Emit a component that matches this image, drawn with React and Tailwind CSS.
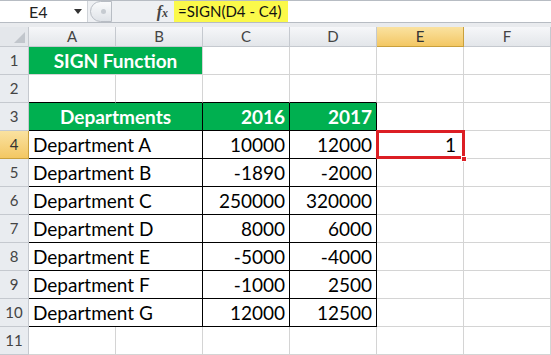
import React from "react";

const font = { fontFamily: "Lato, 'Open Sans', sans-serif" };

function RowHeader({ n, active }) {
  return (
    <div
      className={
        active
          ? "w-[29px] shrink-0 flex items-center justify-center border-r border-b border-[#c9a03c] bg-gradient-to-b from-[#fae2a0] to-[#f3c762] text-[15px] text-[#333]"
          : "w-[29px] shrink-0 flex items-center justify-center border-r border-b border-[#c5c9cf] bg-[#e9ecf0] text-[15px] text-[#444]"
      }
    >
      {n}
    </div>
  );
}

function ColHeader({ label, active, last }) {
  if (active)
    return (
      <div className="w-[87px] shrink-0 flex items-center justify-center border-r border-b border-[#c9a03c] bg-gradient-to-b from-[#fae2a0] to-[#f3c762] text-[15px] text-[#333]">
        {label}
      </div>
    );
  return (
    <div
      className={
        last
          ? "flex-1 flex items-center justify-center border-r border-b border-[#c5c9cf] bg-gradient-to-b from-[#f6f7f9] to-[#e3e6ea] text-[15px] text-[#444]"
          : "w-[87px] shrink-0 flex items-center justify-center border-r border-b border-[#c5c9cf] bg-gradient-to-b from-[#f6f7f9] to-[#e3e6ea] text-[15px] text-[#444]"
      }
    >
      {label}
    </div>
  );
}

const data = [
  ["Department A", "10000", "12000"],
  ["Department B", "-1890", "-2000"],
  ["Department C", "250000", "320000"],
  ["Department D", "8000", "6000"],
  ["Department E", "-5000", "-4000"],
  ["Department F", "-1000", "2500"],
  ["Department G", "12000", "12500"],
];

function EmptyTail() {
  return (
    <>
      <div className="w-[87px] shrink-0 border-r border-b border-[#d4d4d4]" />
      <div className="flex-1 border-r border-b border-[#d4d4d4]" />
    </>
  );
}

export default function App() {
  return (
    <div className="w-[551px] h-[355px] overflow-hidden bg-white flex flex-col text-black" style={font}>
      {/* Formula bar */}
      <div className="h-[23px] flex shrink-0 bg-[#eef0f3] border-t border-b border-[#b7bcc3]">
        <div className="w-[88px] bg-white flex items-center pl-[29px] pr-[5px] text-[16px] text-[#222] border-r border-[#cfd3d8]">
          <span className="flex-1">E4</span>
          <svg width="8" height="5" viewBox="0 0 8 5">
            <path d="M0 0 L8 0 L4 5 Z" fill="#333" />
          </svg>
        </div>
        <div className="w-[86px] flex items-center">
          <div className="ml-[2px] w-[22px] h-[21px] rounded-l-full border border-[#b8bdc4] bg-gradient-to-b from-[#fafbfc] to-[#dfe3e8] flex items-center justify-center">
            <div className="w-[5px] h-[5px] rounded-full bg-[#c6cbd1] ml-[4px]" />
          </div>
          <span
            className="ml-auto mr-[6px] text-[16px] italic font-bold text-[#444]"
            style={{ fontFamily: "'Liberation Serif', serif" }}
          >
            f<span className="text-[12px]">x</span>
          </span>
        </div>
        <div className="w-[114px] bg-[#fbf94a] flex items-center pl-[4px] text-[15px] text-[#111] whitespace-nowrap overflow-hidden">
          =SIGN(D4 - C4)
        </div>
        <div className="flex-1 bg-white" />
      </div>
      <div className="h-[4px] shrink-0 bg-[#e9ebee]" />

      {/* Column header */}
      <div className="h-[20px] flex shrink-0">
        <div className="w-[29px] shrink-0 border-r border-b border-[#c5c9cf] bg-[#e4e7eb] relative">
          <svg className="absolute right-[3px] bottom-[3px]" width="11" height="11" viewBox="0 0 11 11">
            <path d="M11 0 L11 11 L0 11 Z" fill="#c1c6cc" />
          </svg>
        </div>
        <ColHeader label="A" />
        <ColHeader label="B" />
        <ColHeader label="C" />
        <ColHeader label="D" />
        <ColHeader label="E" active />
        <ColHeader label="F" last />
      </div>

      {/* Row 1 */}
      <div className="h-[28px] flex shrink-0">
        <RowHeader n={1} />
        <div className="w-[174px] shrink-0 bg-[#00b050] border-r border-b border-[#d4d4d4] flex items-center justify-center pt-[2px] text-[19px] font-bold text-white">
          SIGN Function
        </div>
        <div className="w-[87px] shrink-0 border-r border-b border-[#d4d4d4]" />
        <div className="w-[87px] shrink-0 border-r border-b border-[#d4d4d4]" />
        <EmptyTail />
      </div>

      {/* Row 2 */}
      <div className="h-[28px] flex shrink-0">
        <RowHeader n={2} />
        <div className="w-[87px] shrink-0 border-r border-b border-r-[#d4d4d4] border-b-black" />
        <div className="w-[87px] shrink-0 border-r border-b border-r-[#d4d4d4] border-b-black" />
        <div className="w-[87px] shrink-0 border-r border-b border-r-[#d4d4d4] border-b-black" />
        <div className="w-[87px] shrink-0 border-r border-b border-r-[#d4d4d4] border-b-black" />
        <EmptyTail />
      </div>

      {/* Row 3 */}
      <div className="h-[28px] flex shrink-0">
        <RowHeader n={3} />
        <div className="w-[174px] shrink-0 bg-[#00b050] border-r border-b border-black flex items-center justify-center pt-[2px] text-[19px] font-bold text-white">
          Departments
        </div>
        <div className="w-[87px] shrink-0 bg-[#00b050] border-r border-b border-black flex items-center justify-end pr-[4px] pt-[2px] text-[19px] font-bold text-white">
          2016
        </div>
        <div className="w-[87px] shrink-0 bg-[#00b050] border-r border-b border-black flex items-center justify-end pr-[4px] pt-[2px] text-[19px] font-bold text-white">
          2017
        </div>
        <EmptyTail />
      </div>

      {/* Rows 4-10 */}
      {data.map((r, i) => (
        <div key={i} className="h-[28px] flex shrink-0">
          <RowHeader n={i + 4} active={i === 0} />
          <div className="w-[174px] shrink-0 border-r border-b border-black flex items-center pl-[4px] pt-[2px] text-[19px]">
            {r[0]}
          </div>
          <div className="w-[87px] shrink-0 border-r border-b border-black flex items-center justify-end pr-[4px] pt-[2px] text-[19px]">
            {r[1]}
          </div>
          <div className="w-[87px] shrink-0 border-r border-b border-black flex items-center justify-end pr-[4px] pt-[2px] text-[19px]">
            {r[2]}
          </div>
          {i === 0 ? (
            <>
              <div className="w-[87px] shrink-0 border-r border-b border-[#d4d4d4] relative flex items-center justify-end pr-[7px] pt-[2px] text-[19px]">
                1
                <div className="absolute left-[-1px] top-[-1px] right-[-2px] bottom-[-1px] border-[3px] border-[#dc1e24]" />
                <div className="absolute right-[-4px] bottom-[-4px] w-[6px] h-[6px] bg-[#dc1e24] border border-white" />
              </div>
              <div className="flex-1 border-r border-b border-[#d4d4d4]" />
            </>
          ) : (
            <EmptyTail />
          )}
        </div>
      ))}

      {/* Row 11 */}
      <div className="h-[28px] flex shrink-0">
        <RowHeader n={11} />
        <div className="w-[87px] shrink-0 border-r border-b border-[#d4d4d4]" />
        <div className="w-[87px] shrink-0 border-r border-b border-[#d4d4d4]" />
        <div className="w-[87px] shrink-0 border-r border-b border-[#d4d4d4]" />
        <div className="w-[87px] shrink-0 border-r border-b border-[#d4d4d4]" />
        <EmptyTail />
      </div>
    </div>
  );
}
